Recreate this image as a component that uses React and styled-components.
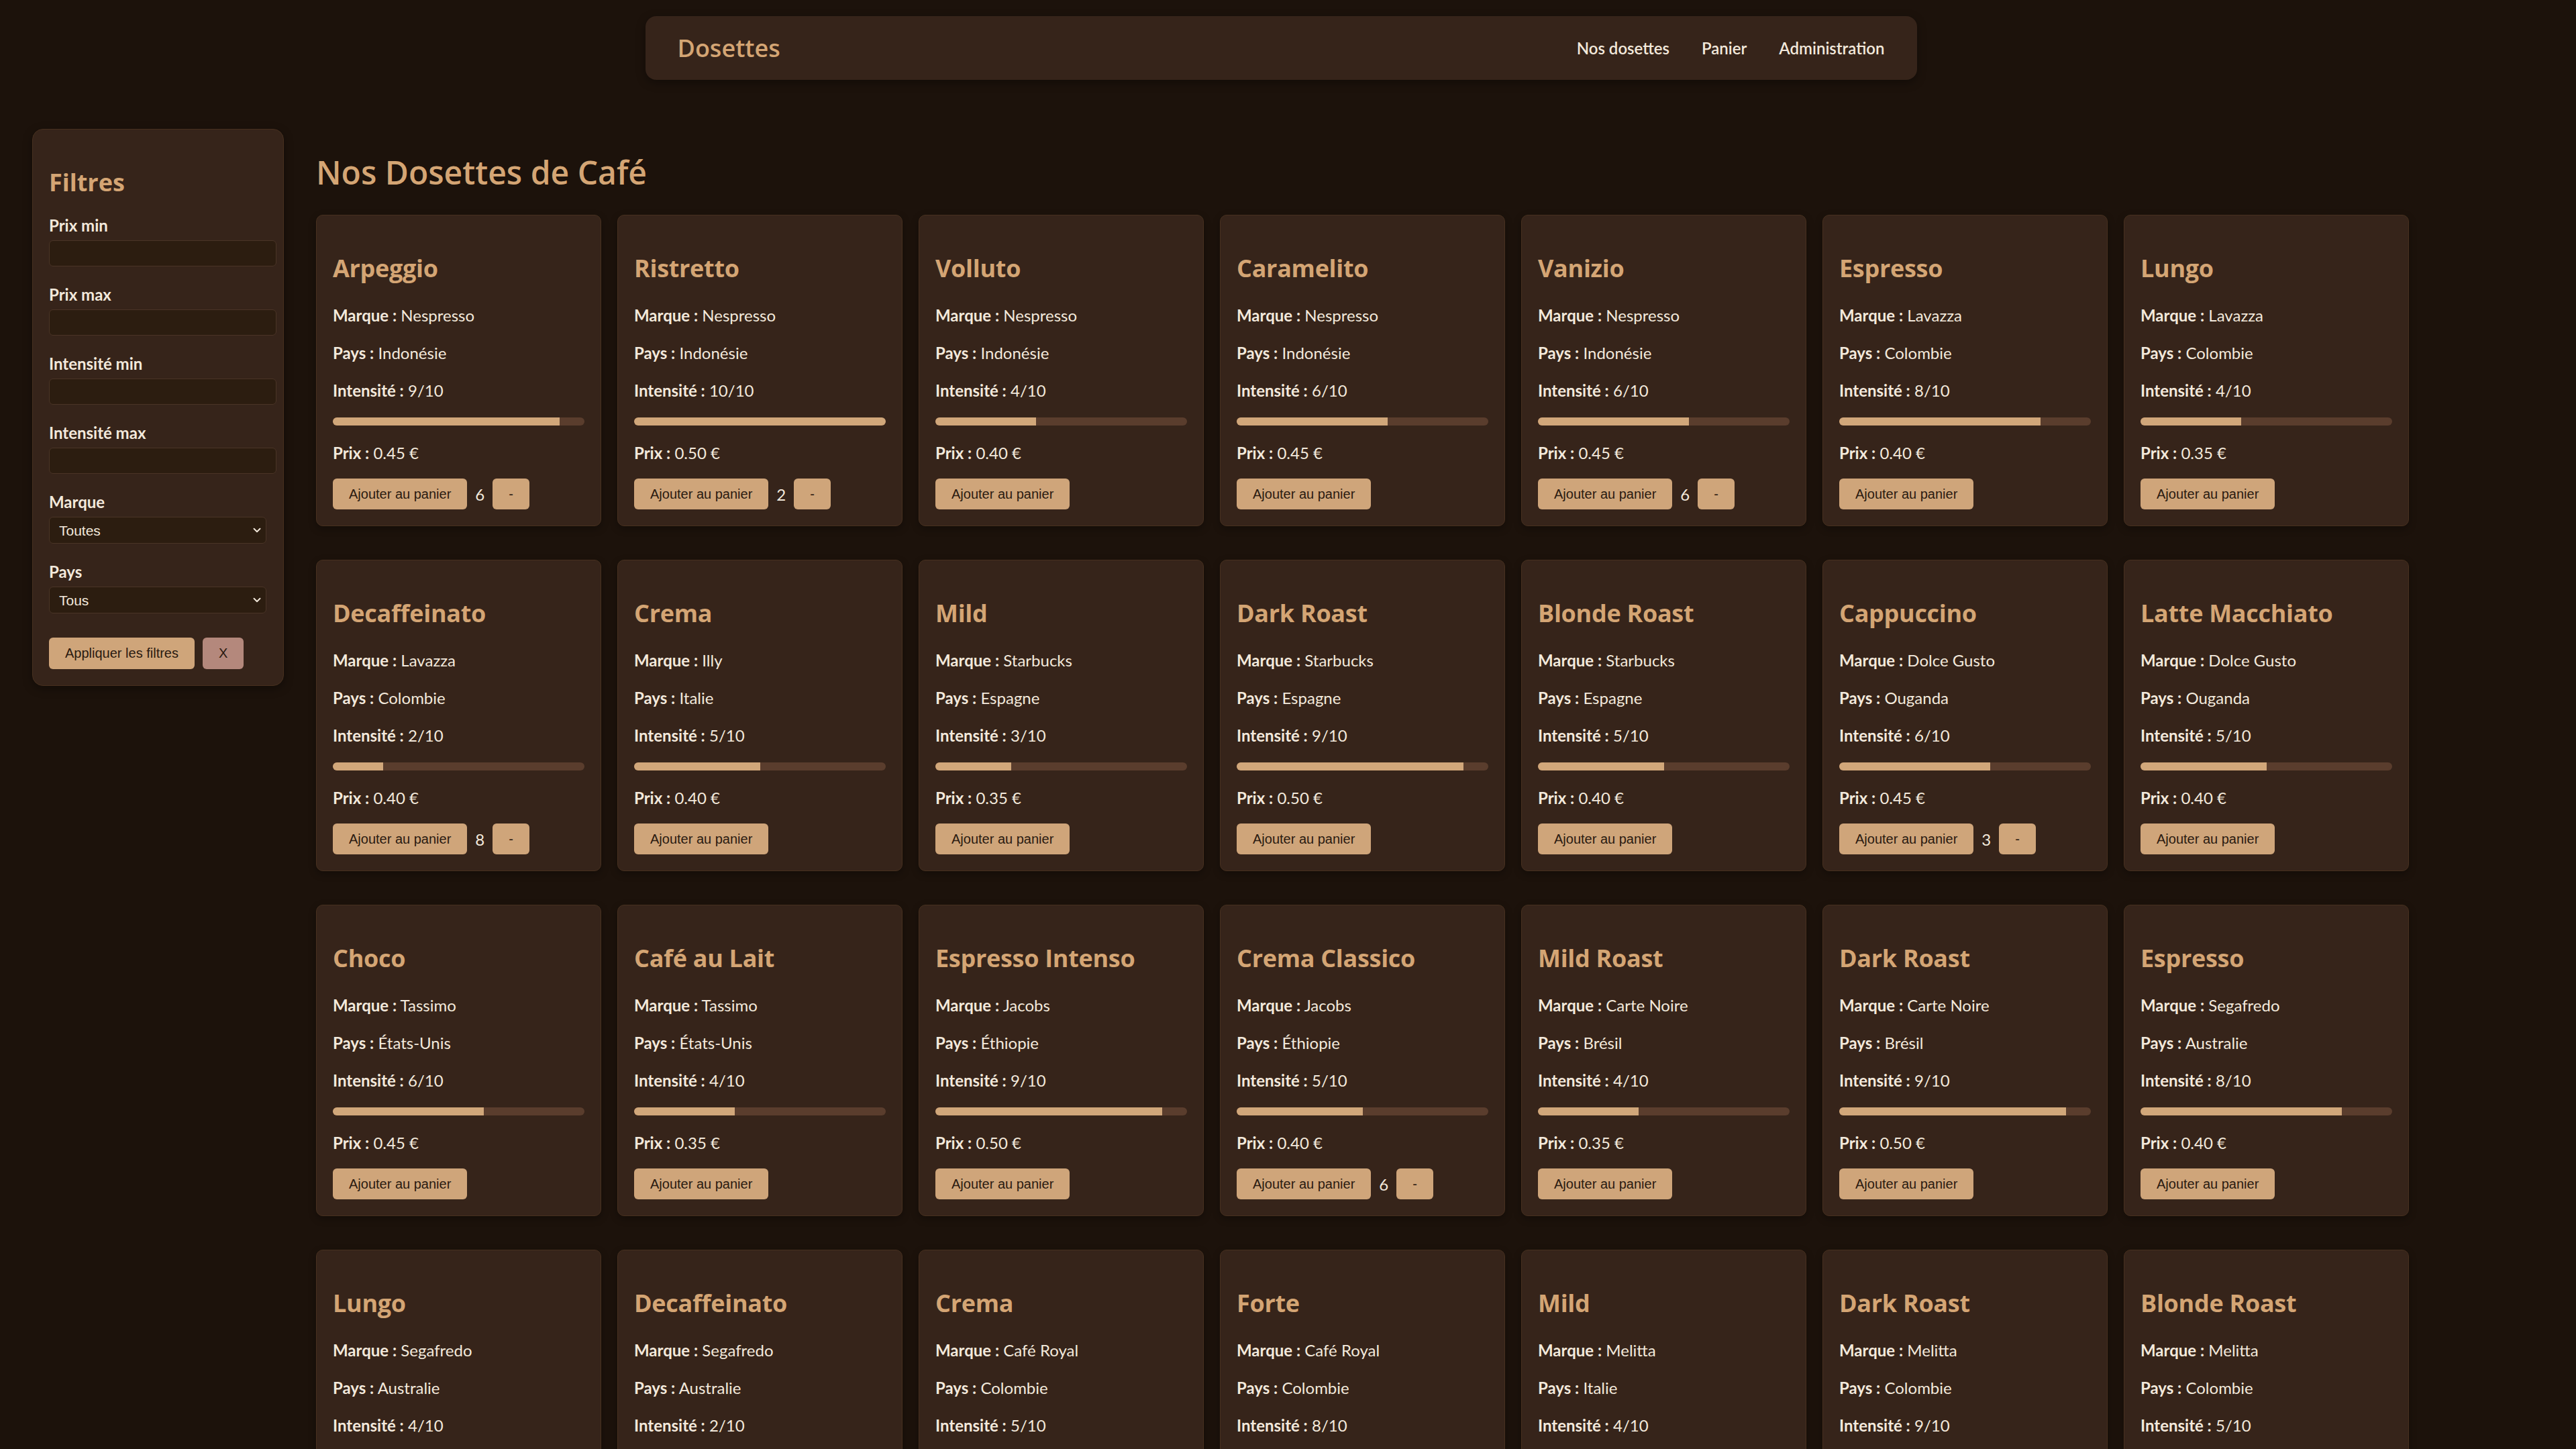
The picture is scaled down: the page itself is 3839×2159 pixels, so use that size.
import React from 'react';
import styled, { createGlobalStyle } from 'styled-components';
import { ChevronDown } from 'lucide-react';

const GlobalStyle = createGlobalStyle`
  body {
    margin: 0;
    background: #1c120b;
    color: #f3e9dc;
    font-family: Lato, "Open Sans", sans-serif;
  }
`;

// right padding stands in for the scrollbar gutter of the original window
const Page = styled.div`
  padding: 24px 21px 48px 0;
`;

const Navbar = styled.nav`
  width: 1895px;
  height: 95px;
  margin: 0 auto;
  box-sizing: border-box;
  padding: 0 48px;
  display: flex;
  align-items: center;
  justify-content: space-between;
  background: #36241a;
  border-radius: 16px;
  box-shadow: 0 4px 14px rgba(0, 0, 0, 0.35);
`;

const Brand = styled.div`
  font-family: "Open Sans", Lato, sans-serif;
  font-size: 36px;
  font-weight: 600;
  color: #d4a574;
`;

const NavLinks = styled.div`
  display: flex;
  gap: 48px;
`;

const NavLink = styled.a`
  font-size: 24px;
  font-weight: 600;
  color: #f3e9dc;
  text-decoration: none;
`;

const Layout = styled.div`
  display: flex;
  align-items: flex-start;
  gap: 48px;
  padding: 0 48px;
  margin-top: 73px;
`;

const Sidebar = styled.aside`
  width: 375px;
  flex-shrink: 0;
  box-sizing: border-box;
  padding: 24px;
  background: #36241a;
  border: 1px solid #47301f;
  border-radius: 16px;
  box-shadow: 0 4px 14px rgba(0, 0, 0, 0.35);
`;

const SideTitle = styled.h2`
  font-family: "Open Sans", Lato, sans-serif;
  font-size: 36px;
  line-height: 44px;
  font-weight: 700;
  color: #d4a574;
  margin: 33px 0 26px;
`;

const Field = styled.div`
  margin-bottom: 26px;
`;

const Label = styled.label`
  display: block;
  font-size: 24px;
  line-height: 32px;
  font-weight: 700;
  color: #f3e9dc;
  margin-bottom: 6px;
`;

const Input = styled.input`
  display: block;
  box-sizing: content-box;
  width: 100%;
  height: 21px;
  padding: 8px 6px;
  background: #2c1d10;
  border: 1px solid #4a3426;
  border-radius: 6px;
  color: #f3e9dc;
  font: 20px "Liberation Sans", Arial, sans-serif;
  outline: none;
`;

const SelectWrap = styled.div`
  position: relative;
  width: 324px;

  svg {
    position: absolute;
    right: 5px;
    top: 50%;
    transform: translateY(-50%);
    pointer-events: none;
  }
`;

const Select = styled.select`
  appearance: none;
  display: block;
  width: 100%;
  height: 40px;
  box-sizing: border-box;
  padding: 0 40px 0 14px;
  background: #2c1d10;
  border: 1px solid #4a3426;
  border-radius: 6px;
  color: #f3e9dc;
  font: 21px "Liberation Sans", Arial, sans-serif;
`;

const ButtonRow = styled.div`
  display: flex;
  gap: 12px;
  margin-top: 36px;
`;

const Button = styled.button`
  font: 20px/23px "Liberation Sans", Arial, sans-serif;
  padding: ${({ $tall }) => ($tall ? '12px' : '11.5px')} 24px;
  border: none;
  border-radius: 6px;
  background: ${({ $reset }) => ($reset ? '#b4887c' : '#cfa57a')};
  color: #2a1a10;
  cursor: pointer;
`;

const Main = styled.main`
  flex: 1;
`;

const PageTitle = styled.h1`
  font-family: "Open Sans", Lato, sans-serif;
  font-size: 48px;
  line-height: 58px;
  font-weight: 600;
  color: #d4a574;
  margin: 36px 0 34px;
`;

const Grid = styled.div`
  display: flex;
  flex-wrap: wrap;
  gap: 50px 24px;
`;

const Card = styled.article`
  width: 425px;
  box-sizing: border-box;
  padding: 24px;
  background: #36241a;
  border: 1px solid #47301f;
  border-radius: 10px;
  box-shadow: 0 4px 12px rgba(0, 0, 0, 0.3);
`;

const CardTitle = styled.h3`
  font-family: "Open Sans", Lato, sans-serif;
  font-size: 36px;
  line-height: 44px;
  font-weight: 700;
  letter-spacing: -0.3px;
  color: #d4a574;
  margin: 33px 0 32px;
`;

const Info = styled.p`
  font-size: 24px;
  line-height: 32px;
  margin: 0 0 ${({ $gap }) => $gap || 24}px;

  b {
    font-weight: 700;
  }
`;

const Bar = styled.div`
  height: 12px;
  border-radius: 6px;
  background: #5a3d2d;
  overflow: hidden;
  margin-bottom: 25px;
`;

const BarFill = styled.div`
  height: 100%;
  background: #d1a77a;
`;

const Actions = styled.div`
  display: flex;
  align-items: center;
  gap: 12px;
`;

const Count = styled.span`
  font-size: 24px;
  color: #f3e9dc;
`;

const pods = [
  ['Arpeggio', 'Nespresso', 'Indonésie', 9, '0.45', 6],
  ['Ristretto', 'Nespresso', 'Indonésie', 10, '0.50', 2],
  ['Volluto', 'Nespresso', 'Indonésie', 4, '0.40'],
  ['Caramelito', 'Nespresso', 'Indonésie', 6, '0.45'],
  ['Vanizio', 'Nespresso', 'Indonésie', 6, '0.45', 6],
  ['Espresso', 'Lavazza', 'Colombie', 8, '0.40'],
  ['Lungo', 'Lavazza', 'Colombie', 4, '0.35'],
  ['Decaffeinato', 'Lavazza', 'Colombie', 2, '0.40', 8],
  ['Crema', 'Illy', 'Italie', 5, '0.40'],
  ['Mild', 'Starbucks', 'Espagne', 3, '0.35'],
  ['Dark Roast', 'Starbucks', 'Espagne', 9, '0.50'],
  ['Blonde Roast', 'Starbucks', 'Espagne', 5, '0.40'],
  ['Cappuccino', 'Dolce Gusto', 'Ouganda', 6, '0.45', 3],
  ['Latte Macchiato', 'Dolce Gusto', 'Ouganda', 5, '0.40'],
  ['Choco', 'Tassimo', 'États-Unis', 6, '0.45'],
  ['Café au Lait', 'Tassimo', 'États-Unis', 4, '0.35'],
  ['Espresso Intenso', 'Jacobs', 'Éthiopie', 9, '0.50'],
  ['Crema Classico', 'Jacobs', 'Éthiopie', 5, '0.40', 6],
  ['Mild Roast', 'Carte Noire', 'Brésil', 4, '0.35'],
  ['Dark Roast', 'Carte Noire', 'Brésil', 9, '0.50'],
  ['Espresso', 'Segafredo', 'Australie', 8, '0.40'],
  ['Lungo', 'Segafredo', 'Australie', 4, '0.35'],
  ['Decaffeinato', 'Segafredo', 'Australie', 2, '0.40'],
  ['Crema', 'Café Royal', 'Colombie', 5, '0.40'],
  ['Forte', 'Café Royal', 'Colombie', 8, '0.50'],
  ['Mild', 'Melitta', 'Italie', 4, '0.35'],
  ['Dark Roast', 'Melitta', 'Colombie', 9, '0.50'],
  ['Blonde Roast', 'Melitta', 'Colombie', 5, '0.40'],
];

const PodCard = ({ name, brand, country, intensity, price, qty }) => (
  <Card>
    <CardTitle>{name}</CardTitle>
    <Info><b>Marque :</b> {brand}</Info>
    <Info><b>Pays :</b> {country}</Info>
    <Info><b>Intensité :</b> {intensity}/10</Info>
    <Bar>
      <BarFill style={{ width: `${intensity * 10}%` }} />
    </Bar>
    <Info $gap={22}><b>Prix :</b> {price} €</Info>
    <Actions>
      <Button>Ajouter au panier</Button>
      {qty && (
        <>
          <Count>{qty}</Count>
          <Button>-</Button>
        </>
      )}
    </Actions>
  </Card>
);

const FilterSelect = ({ label, children }) => (
  <Field>
    <Label>{label}</Label>
    <SelectWrap>
      <Select>{children}</Select>
      <ChevronDown size={18} color="#f3e9dc" strokeWidth={2.5} />
    </SelectWrap>
  </Field>
);

export default function App() {
  return (
    <Page>
      <GlobalStyle />
      <Navbar>
        <Brand>Dosettes</Brand>
        <NavLinks>
          <NavLink href="#">Nos dosettes</NavLink>
          <NavLink href="#">Panier</NavLink>
          <NavLink href="#">Administration</NavLink>
        </NavLinks>
      </Navbar>
      <Layout>
        <Sidebar>
          <SideTitle>Filtres</SideTitle>
          <Field>
            <Label>Prix min</Label>
            <Input type="number" />
          </Field>
          <Field>
            <Label>Prix max</Label>
            <Input type="number" />
          </Field>
          <Field>
            <Label>Intensité min</Label>
            <Input type="number" />
          </Field>
          <Field>
            <Label>Intensité max</Label>
            <Input type="number" />
          </Field>
          <FilterSelect label="Marque">
            <option>Toutes</option>
          </FilterSelect>
          <FilterSelect label="Pays">
            <option>Tous</option>
          </FilterSelect>
          <ButtonRow>
            <Button $tall>Appliquer les filtres</Button>
            <Button $tall $reset>X</Button>
          </ButtonRow>
        </Sidebar>
        <Main>
          <PageTitle>Nos Dosettes de Café</PageTitle>
          <Grid>
            {pods.map(([name, brand, country, intensity, price, qty], i) => (
              <PodCard
                key={i}
                name={name}
                brand={brand}
                country={country}
                intensity={intensity}
                price={price}
                qty={qty}
              />
            ))}
          </Grid>
        </Main>
      </Layout>
    </Page>
  );
}
